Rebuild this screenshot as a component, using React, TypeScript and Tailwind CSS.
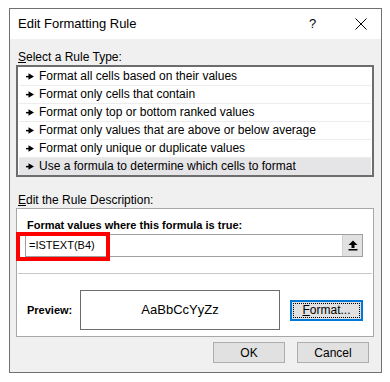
import React from "react";

const ruleTypes = [
  "Format all cells based on their values",
  "Format only cells that contain",
  "Format only top or bottom ranked values",
  "Format only values that are above or below average",
  "Format only unique or duplicate values",
  "Use a formula to determine which cells to format",
];

function Bullet() {
  return (
    <svg width="8" height="7" viewBox="0 0 8 7" className="shrink-0">
      <rect x="0" y="2.9" width="4" height="1.5" fill="#000" />
      <polygon points="2.5,0.3 8,3.6 2.5,6.8" fill="#000" />
    </svg>
  );
}

export default function App() {
  return (
    <div
      className="w-[390px] h-[382px] bg-white pt-[8px] pl-[9px] text-[12px] text-black"
      style={{ fontFamily: '"Segoe UI", "Liberation Sans", Arial, sans-serif' }}
    >
      <div className="w-[373px] h-[365px] border border-[#707070] flex flex-col bg-[#f0f0f0]">
        {/* title bar */}
        <div className="h-[30px] bg-white flex items-center pl-[8px] shrink-0">
          <span className="text-[13px] flex-1">Edit Formatting Rule</span>
          <span className="text-[13px] w-[10px] mr-[36px]">?</span>
          <svg width="12" height="12" viewBox="0 0 12 12" className="mr-[14px]">
            <path d="M0.5 0.5 L11.5 11.5 M11.5 0.5 L0.5 11.5" stroke="#000" strokeWidth="1" />
          </svg>
        </div>

        <div className="flex flex-col px-[6px]">
          <div className="h-[16px] leading-[16px] mt-[10px] pl-[2px]">
            <span className="underline">S</span>elect a Rule Type:
          </div>

          <div className="w-[358px] h-[112px] border-2 border-[#6d6d6d] bg-white flex flex-col p-[1px]">
            {ruleTypes.map((r, i) => (
              <div
                key={r}
                className={
                  "h-[18px] flex items-center gap-[5px] pl-[7px] " +
                  (i === ruleTypes.length - 1
                    ? "bg-[#e5e5e8]"
                    : "border-b border-[#ececec]")
                }
              >
                <Bullet />
                <span className="leading-[17px]">{r}</span>
              </div>
            ))}
          </div>

          <div className="h-[16px] leading-[16px] mt-[15px] pl-[2px]">
            <span className="underline">E</span>dit the Rule Description:
          </div>

          <div className="w-[358px] h-[129px] border border-[#a8a8a8] bg-white flex flex-col">
            <div className="h-[16px] leading-[16px] mt-[8px] pl-[10px] font-bold text-[11px]">
              Format values where this formula is true:
            </div>
            <div className="relative ml-[8px] mt-[1px] w-[338px] h-[23px] border border-[#a0a0a0] flex">
              <div className="flex-1 flex items-center pl-[3px] text-[11px]">=ISTEXT(B4)</div>
              <div className="w-[20px] h-full bg-[#e1e1e1] border-l border-[#d0d0d0] flex items-center justify-center">
                <svg width="10" height="11" viewBox="0 0 10 11">
                  <polygon points="5,0.5 9.5,5 6.5,5 6.5,8 3.5,8 3.5,5 0.5,5" fill="#000" />
                  <rect x="0.5" y="9" width="9" height="1.5" fill="#000" />
                </svg>
              </div>
              <div className="absolute left-[-10px] top-[-3px] w-[94px] h-[29px] border-4 border-[#ff0000]" />
            </div>

            <div className="mt-[16px] mx-[1px] border-t border-[#c8c8c8]" />

            <div className="flex items-center mt-[16px] pl-[10px]">
              <span className="font-bold text-[11px] w-[53px]">Preview:</span>
              <div className="w-[200px] h-[40px] border border-[#6d6d6d] flex items-center justify-center text-[13px]">
                AaBbCcYyZz
              </div>
              <div className="ml-[10px] w-[73px] h-[21px] border-2 border-[#0078d7] bg-[#e1e1e1] p-[1px]">
                <div className="w-full h-full border border-dotted border-black flex items-center justify-center leading-none">
                  <span>
                    <span className="underline">F</span>ormat...
                  </span>
                </div>
              </div>
            </div>
          </div>

          <div className="flex justify-end gap-[12px] mt-[5px] pr-[6px]">
            <div className="w-[72px] h-[21px] bg-[#e1e1e1] border border-[#adadad] flex items-center justify-center">
              OK
            </div>
            <div className="w-[72px] h-[21px] bg-[#e1e1e1] border border-[#adadad] flex items-center justify-center">
              Cancel
            </div>
          </div>
        </div>
      </div>
    </div>
  );
}
